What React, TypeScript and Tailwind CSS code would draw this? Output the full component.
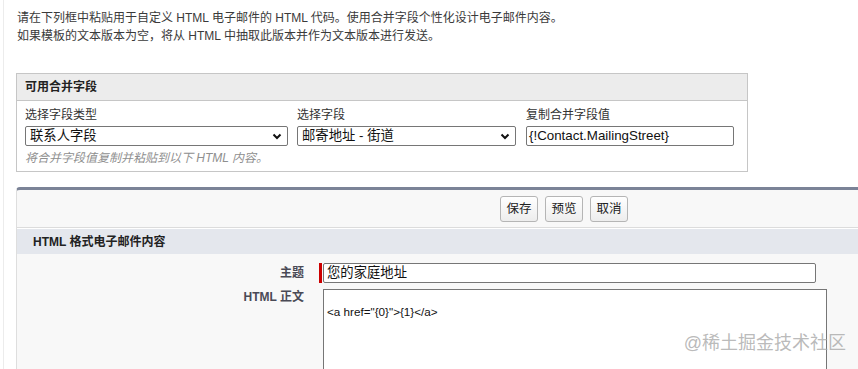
import React from 'react'

const font = "font-['Liberation_Sans','Noto_Sans_CJK_SC',sans-serif]"

const Chevron = () => (
    <svg width="10" height="7" viewBox="0 0 10 7" className="shrink-0">
        <path d="M1.5 1.5 5 5 8.5 1.5" fill="none" stroke="#111" strokeWidth="2" />
    </svg>
)

const FakeSelect: React.FC<{ value: string; width: string }> = ({ value, width }) => (
    <div
        className={`flex h-[20px] items-center justify-between rounded-[2px] border border-[#767676] bg-white pl-[4px] pr-[5px] text-[13.33px] text-[#111] ${width}`}>
        <span className="leading-none">{value}</span>
        <Chevron />
    </div>
)

const Btn: React.FC<{ label: string }> = ({ label }) => (
    <button className="h-[26px] w-[38px] rounded-[3px] border border-[#b5b5b5] bg-gradient-to-b from-white to-[#ededed] text-[12.5px] text-[#222]">
        {label}
    </button>
)

export default function App() {
    return (
        <div className={`relative h-[369px] overflow-hidden bg-white text-[12px] text-[#333] ${font}`}>
            <div className="ml-[3px] h-full border-l border-[#ececec] pl-[12px] pt-[9px]">
                <div className="pl-[1px] leading-[18px] text-[#3a3a3a]">
                    <p>请在下列框中粘贴用于自定义 HTML 电子邮件的 HTML 代码。使用合并字段个性化设计电子邮件内容。</p>
                    <p>如果模板的文本版本为空，将从 HTML 中抽取此版本并作为文本版本进行发送。</p>
                </div>

                {/* merge fields */}
                <div className="mt-[28px] w-[732px] border border-[#c6c6c6]">
                    <div className="flex h-[27px] items-center border-b border-[#c6c6c6] bg-[#ececec] px-[8px] font-bold text-[#222]">
                        可用合并字段
                    </div>
                    <div className="px-[8px] pb-[5px] pt-[6px]">
                        <div className="flex">
                            <div className="w-[263px]">
                                <div className="mb-[3px] h-[16px] leading-[16px]">选择字段类型</div>
                                <FakeSelect value="联系人字段" width="w-[263px]" />
                            </div>
                            <div className="ml-[9px] w-[219px]">
                                <div className="mb-[3px] h-[16px] leading-[16px]">选择字段</div>
                                <FakeSelect value="邮寄地址 - 街道" width="w-[219px]" />
                            </div>
                            <div className="ml-[10px] w-[208px]">
                                <div className="mb-[3px] h-[16px] leading-[16px]">复制合并字段值</div>
                                <div className="flex h-[20px] items-center rounded-[2px] border border-[#767676] bg-white pl-[2px] text-[13.33px] text-[#111]">
                                    {'{!Contact.MailingStreet}'}
                                </div>
                            </div>
                        </div>
                        <div className="mt-[4px] text-[12px] italic leading-[16px] text-[#8f8f8f]">
                            将合并字段值复制并粘贴到以下 HTML 内容。
                        </div>
                    </div>
                </div>

                {/* editor block */}
                <div className="mt-[15px] h-[200px] rounded-tl-[4px] border-l border-t-[3px] border-l-[#dedede] border-t-[#7b8397] bg-[#f8f8f8]">
                    <div className="flex gap-[7px] border-b border-[#dcdcdc] pb-[5px] pl-[483px] pt-[6px]">
                        <Btn label="保存" />
                        <Btn label="预览" />
                        <Btn label="取消" />
                    </div>
                    <div className="flex h-[26px] items-center border-t border-white bg-[#e4e7ed] pl-[16px] font-bold text-[#222]">
                        HTML 格式电子邮件内容
                    </div>
                    <div className="pt-[9px]">
                        <div className="flex items-center">
                            <div className="w-[287px] text-right font-bold text-[#4a4a56]">主题</div>
                            <div className="ml-[15px] h-[20px] w-[3px] bg-[#c00]" />
                            <div className="ml-[1px] flex h-[20px] w-[493px] items-center rounded-[2px] border border-[#767676] bg-white pl-[3px] text-[13.33px] text-[#111]">
                                您的家庭地址
                            </div>
                        </div>
                        <div className="mt-[6px] flex items-start">
                            <div className="w-[287px] text-right font-bold leading-[16px] text-[#4a4a56]">HTML 正文</div>
                            <div className="ml-[19px] h-[100px] w-[504px] border border-[#767676] bg-white px-[3px] pt-[1px] text-[11.7px] leading-[14px] text-[#111] whitespace-pre">
                                {'\n<a href="{0}">{1}</a>'}
                            </div>
                        </div>
                    </div>
                </div>
            </div>

            <div className="pointer-events-none absolute bottom-[12px] right-[12px] text-[18px] text-[#a8a8a8]/80">
                @稀土掘金技术社区
            </div>
        </div>
    )
}
